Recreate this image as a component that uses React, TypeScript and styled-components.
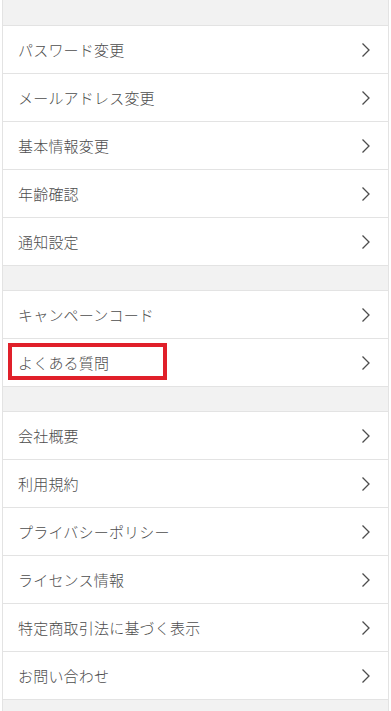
import React from "react";
import styled, { createGlobalStyle } from "styled-components";

const Global = createGlobalStyle`
  html, body { margin: 0; padding: 0; background: #fff; }
  body { font-family: "Noto Sans CJK JP", "Noto Sans", sans-serif; }
`;

const Page = styled.div`
  padding: 0 2px;
  background: #fff;
`;

const Frame = styled.div`
  border-left: 1px solid #e3e3e3;
  border-right: 1px solid #e3e3e3;
  background: #f2f2f2;
  display: flex;
  flex-direction: column;
`;

const Gap = styled.div<{ $h: number }>`
  height: ${(p) => p.$h}px;
  background: #f2f2f2;
`;

const Group = styled.div`
  display: flex;
  flex-direction: column;
  border-top: 1px solid #e3e3e3;
  background: #fff;
`;

const Row = styled.div`
  position: relative;
  height: 47px;
  border-bottom: 1px solid #e3e3e3;
  display: flex;
  align-items: center;
  justify-content: space-between;
  padding: 0 17px 0 15px;
  background: #fff;
`;

const Label = styled.span`
  font-size: 15px;
  font-weight: 300;
  color: #4d4d4d;
  letter-spacing: 0.2px;
`;

const Highlight = styled.div`
  position: absolute;
  left: 5px;
  top: 4px;
  width: 151px;
  height: 29px;
  border: 4px solid #e0202a;
`;

const Chevron = () => (
  <svg width="10" height="16" viewBox="0 0 10 16">
    <polyline points="1.5,1.5 8,8 1.5,14.5" fill="none" stroke="#4d4d4d" strokeWidth="1.3" />
  </svg>
);

const groups: string[][] = [
  ["パスワード変更", "メールアドレス変更", "基本情報変更", "年齢確認", "通知設定"],
  ["キャンペーンコード", "よくある質問"],
  ["会社概要", "利用規約", "プライバシーポリシー", "ライセンス情報", "特定商取引法に基づく表示", "お問い合わせ"],
];

export default function App() {
  return (
    <Page>
      <Global />
      <Frame>
        {groups.map((g, gi) => (
          <React.Fragment key={gi}>
            <Gap $h={gi === 0 ? 25 : 24} />
            <Group>
              {g.map((item) => (
                <Row key={item}>
                  <Label>{item}</Label>
                  <Chevron />
                  {item === "よくある質問" && <Highlight />}
                </Row>
              ))}
            </Group>
          </React.Fragment>
        ))}
        <Gap $h={20} />
      </Frame>
    </Page>
  );
}
